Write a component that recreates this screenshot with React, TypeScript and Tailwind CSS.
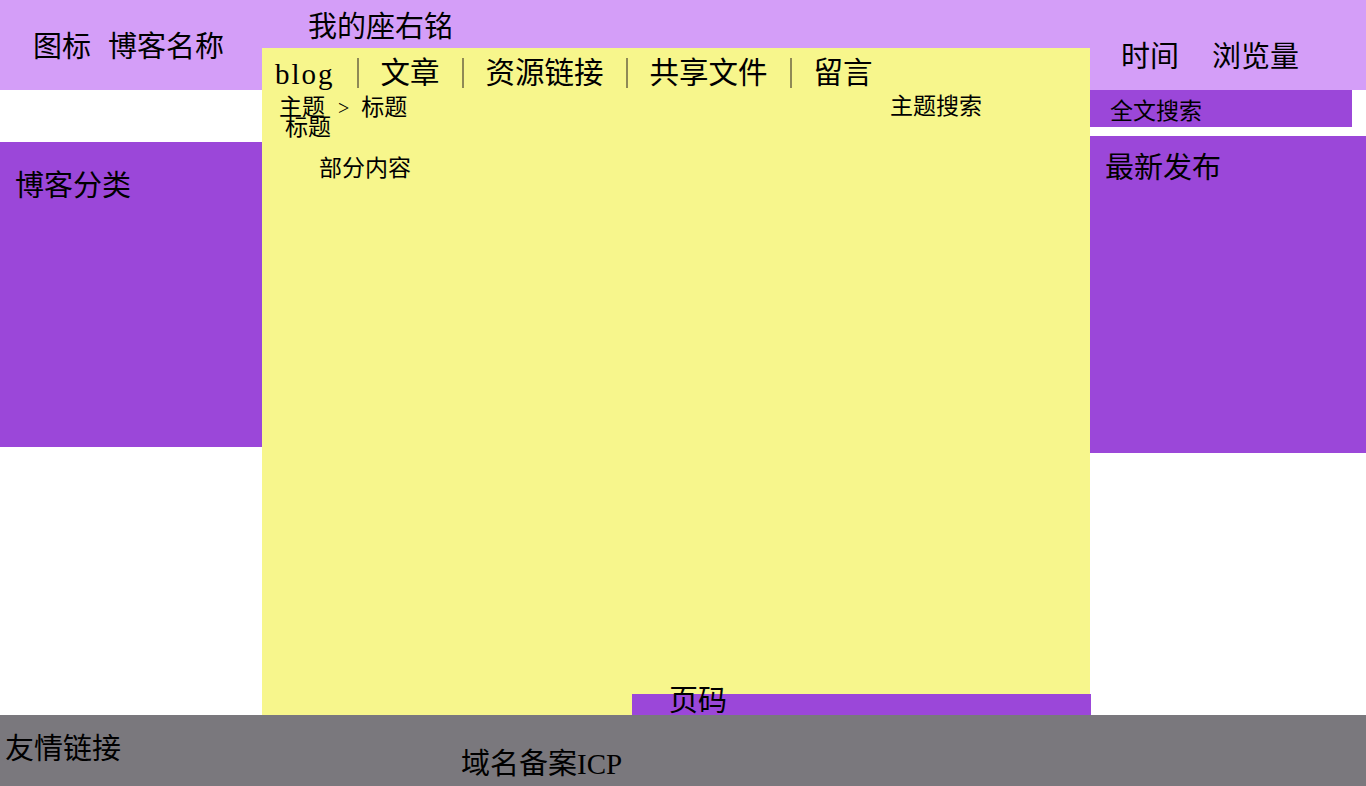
const NAV = ["文章", "资源链接", "共享文件", "留言"];

function Divider() {
  return <span className="w-[2px] h-[30px] bg-[#8f8a55]" />;
}

export default function App() {
  return (
    <div className="w-[1366px] h-[786px] flex flex-col bg-white text-black font-['Liberation_Serif','Noto_Sans_CJK_SC',serif] leading-none overflow-hidden">
      {/* Header */}
      <header className="h-[90px] shrink-0 bg-[#d49ef8] flex items-start text-[29px]">
        <div className="flex gap-[17px] pl-[33px] pt-[33px]">
          <span>图标</span>
          <span>博客名称</span>
        </div>
        <div className="ml-[84px] pt-[13px]">我的座右铭</div>
        <div className="ml-auto flex gap-[33px] pt-[43px] pr-[67px]">
          <span>时间</span>
          <span>浏览量</span>
        </div>
      </header>

      {/* Body */}
      <div className="h-[667px] shrink-0 mt-[-42px] flex">
        {/* Left sidebar */}
        <aside className="w-[262px] shrink-0 pt-[94px]">
          <div className="w-[264px] h-[305px] bg-[#9b47d9] pl-[15px] pt-[30px] text-[29px]">博客分类</div>
        </aside>

        {/* Main */}
        <main className="w-[828px] shrink-0 bg-[#f7f68c] flex flex-col">
          <nav className="h-[30px] mt-[10px] pl-[13px] flex items-center gap-[22px] text-[29.5px]">
            <span className="tracking-[2px] pt-[2px] text-[29px]">blog</span>
            {NAV.map((item) => (
              <div key={item} className="flex items-center gap-[22px]">
                <Divider />
                <span className="pt-[2px]">{item}</span>
              </div>
            ))}
          </nav>

          <div className="mt-[10px] flex items-center text-[23px] leading-[20px]">
            <div className="flex items-center pl-[17px]">
              <span>主题</span>
              <span className="ml-[13px] mr-[12px] text-[20px] font-light">&gt;</span>
              <span>标题</span>
            </div>
            <span className="ml-auto mr-[108px] mt-[-2px]">主题搜索</span>
          </div>
          <div className="pl-[23px] text-[23px] leading-[20px]">标题</div>
          <div className="pl-[57px] mt-[19px] text-[23px]">部分内容</div>

          {/* Pager */}
          <div className="mt-auto ml-[370px] w-[459px] h-[21px] bg-[#9b47d9]">
            <div className="pl-[37px] mt-[-7px] text-[29px]">页码</div>
          </div>
        </main>

        {/* Right sidebar */}
        <aside className="flex-1 pt-[42px] flex flex-col">
          <div className="w-[262px] h-[37px] bg-[#9b47d9] pl-[20px] pt-[10px] text-[23px]">全文搜索</div>
          <div className="mt-[9px] h-[317px] bg-[#9b47d9] pl-[15px] pt-[18px] text-[29px]">最新发布</div>
        </aside>
      </div>

      {/* Footer */}
      <footer className="flex-1 bg-[#7a787d] flex items-start text-[29px]">
        <span className="pl-[5px] pt-[20px]">友情链接</span>
        <span className="ml-[340px] pt-[35px]">域名备案ICP</span>
      </footer>
    </div>
  );
}
